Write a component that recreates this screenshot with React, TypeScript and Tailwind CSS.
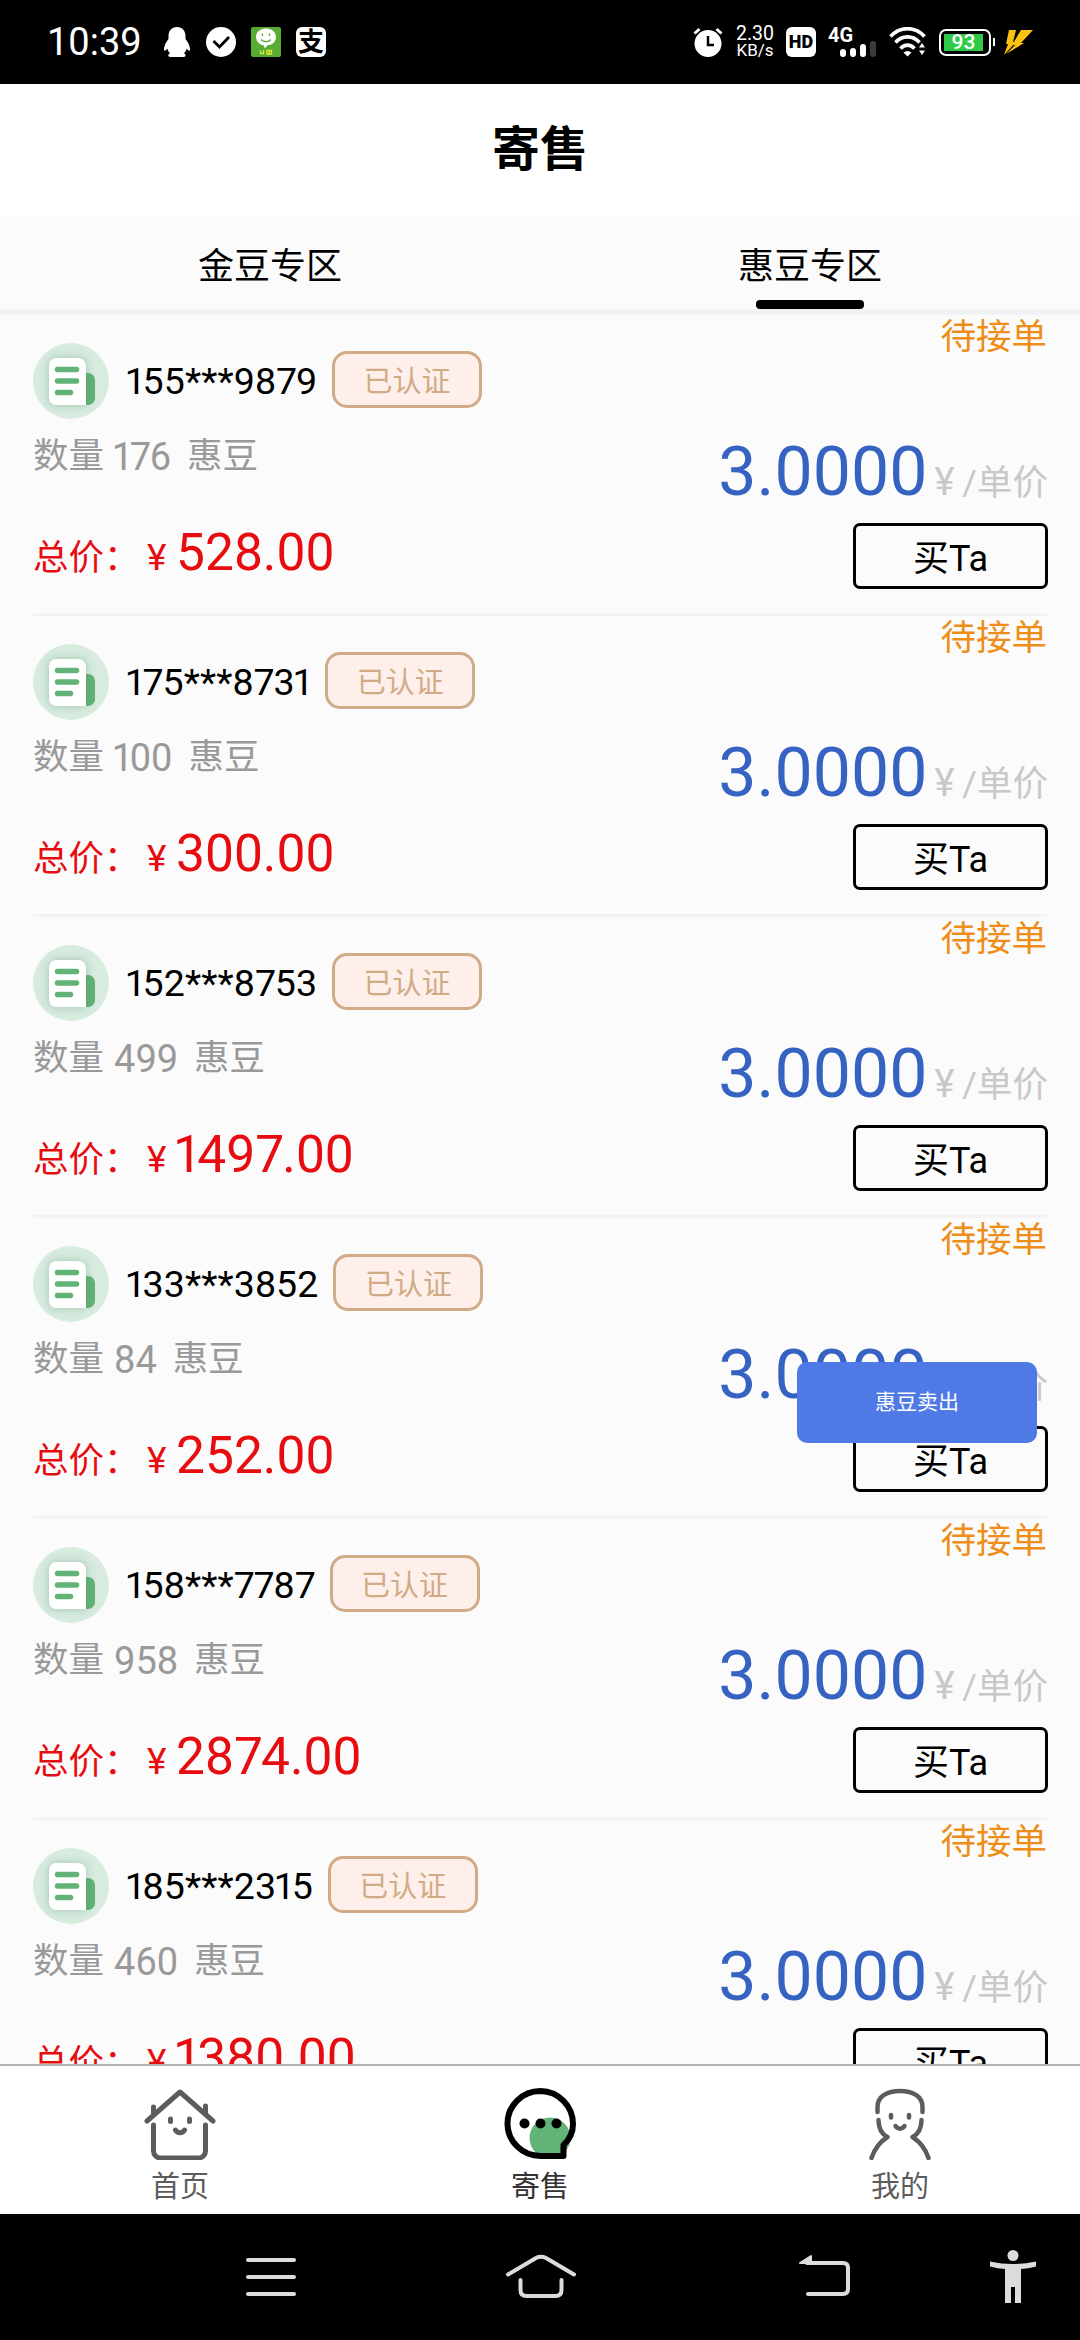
import type { ReactNode } from "react";

type Order = {
  phone: string;
  amount: string;
  total: string;
};

const orders: Order[] = [
  { phone: "155***9879", amount: "176", total: "528.00" },
  { phone: "175***8731", amount: "100", total: "300.00" },
  { phone: "152***8753", amount: "499", total: "1497.00" },
  { phone: "133***3852", amount: "84", total: "252.00" },
  { phone: "158***7787", amount: "958", total: "2874.00" },
  { phone: "185***2315", amount: "460", total: "1380.00" },
];

// "1" and "7" are narrower than the other digits
const digitClass: Record<string, string> = {
  "1": "-ml-[0.06em] -mr-[0.09em]",
  "7": "-mr-[0.035em]",
};

function Digits({ value }: { value: string }) {
  return (
    <>
      {value.split("").map((char, index) => (
        <span key={index} className={digitClass[char]}>
          {char}
        </span>
      ))}
    </>
  );
}

function StatusBar() {
  return (
    <div className="flex h-[84px] shrink-0 items-center bg-black pl-[47px] pr-[47px] text-white">
      <span className="w-[116px] text-[38px] leading-[46px]">10:39</span>

      <div className="flex items-center gap-[15px]">
        <svg width="28" height="30" viewBox="0 0 28 30" fill="white">
          <path d="M14 0C8.500 0 5.500 4 5.500 9v3C3 15 1 19 1 22.500c0 2 1.500 1.500 3.200-1 .6 2 1.600 3.500 2.800 4.700-2.200 1-2.400 3.300.3 3.800h13.400c2.700-.5 2.500-2.800.3-3.800 1.200-1.200 2.200-2.700 2.800-4.700 1.700 2.500 3.200 3 3.200 1 0-3.500-2-7.500-4.500-10.500V9c0-5-3-9-8.500-9z" />
        </svg>
        <svg width="30" height="30" viewBox="0 0 30 30">
          <circle cx="15" cy="15" r="15" fill="white" />
          <path d="M7.500 14l6 6 9.500-10" fill="none" stroke="black" strokeWidth="2.800" />
        </svg>
        <svg width="30" height="30" viewBox="0 0 30 30">
          <rect width="30" height="30" rx="2" fill="#58ab35" />
          <path d="M15 1.500c-6 0-10 3.700-10 8.500 0 4.500 3.500 7.500 7.500 8.300l1.500 3.200 2.500-3.200c5-.5 8.500-3.800 8.500-8.300 0-4.800-4-8.500-10-8.500z" fill="white" />
          <path d="M11.500 6.500v2.500M18.500 6.500v2.500M10 12.500c2.500 3 7.500 3 10 0" fill="none" stroke="#58ab35" strokeWidth="1.300" />
          <path d="M9.500 23.500v3h3M12.500 23v4M16 23.500h4.500v3.500H16zM18.200 23.500v3.500" fill="none" stroke="#d8e83a" strokeWidth="1.300" />
        </svg>
        <span className="flex h-[30px] w-[30px] items-center justify-center rounded-[6px] bg-white text-[26px] font-bold leading-[30px] text-black">
          支
        </span>
      </div>

      <div className="ml-auto flex items-center">
        <svg width="30" height="30" viewBox="0 0 30 30">
          <circle cx="15" cy="16.500" r="13.500" fill="white" />
          <path d="M1.500 6.500l5-4.500M28.500 6.500l-5-4.500" stroke="white" strokeWidth="3" />
          <path d="M15 9v9h6" fill="none" stroke="black" strokeWidth="2.500" />
        </svg>
        <div className="ml-3 flex w-[40px] flex-col items-center text-[17px] leading-[17px]">
          <span className="text-[19.500px]">2.30</span>
          <span>KB/s</span>
        </div>
        <span className="ml-[11px] flex h-[30px] w-[30px] items-center justify-center rounded-[6px] bg-white text-[18px] font-black leading-[22px] text-black">
          HD
        </span>
        <div className="relative ml-[12px] h-[30px] w-[48px]">
          <span className="absolute -top-[2px] left-0 text-[20px] font-bold leading-[20px]">4G</span>
          <div className="flex h-full items-end justify-end gap-1">
            <i className="h-2 w-1.5 rounded-sm bg-white" />
            <i className="h-[9px] w-1.5 rounded-sm bg-white" />
            <i className="h-[13px] w-1.5 rounded-sm bg-white" />
            <i className="h-4 w-1.5 rounded-sm bg-[#3c3c3c]" />
          </div>
        </div>
        <svg className="ml-[13px]" width="38" height="30" viewBox="0 0 38 30">
          <g fill="none" stroke="white" strokeWidth="3.600">
            <path d="M1.500 9.500C11-1 26-1 35.500 9.500" />
            <path d="M6.500 15.500c6.500-7.500 17.500-7.500 24 0" />
            <path d="M11.500 21.500c4-4.500 10-4.500 14 0" />
          </g>
          <path d="M14.500 25.500c2.500-2 5.500-2 8 0L18.500 29.500z" fill="white" />
          <path d="M30 20.500l3-4.500 3 4.500zM30 23.500l3 4.500 3-4.500z" fill="white" />
        </svg>
        <div className="ml-[12px] flex h-[27px] w-[52px] items-center rounded-[7px] border-2 border-white p-[3px]">
          <div className="flex h-[17px] w-[39px] items-center justify-center bg-[#2fcb48] text-[21px] font-medium leading-[24px]">
            93
          </div>
        </div>
        <i className="ml-0.5 h-2 w-[2px] bg-white" />
        <svg className="ml-[8px]" width="30" height="25" viewBox="0 0 30 25" fill="#fdc20f">
          <path d="M6 0h7l-3 12h3L1 25l4-11H3z" />
          <path d="M18 0h12L18 13h3L3 24l9-9h-3z" />
        </svg>
      </div>
    </div>
  );
}

function OrderIcon() {
  return (
    <svg width="76" height="76" viewBox="0 0 76 76">
      <circle cx="38" cy="38" r="38" fill="#d7ebdf" />
      <path d="M52 30h3a7 7 0 0 1 7 7v19a7 7 0 0 1-7 6h-3z" fill="#62b377" />
      <path
        className="drop-shadow-[0_0_4px_rgba(60,120,80,0.35)]"
        d="M23 15h22a8 8 0 0 1 8 8v39H23a7 7 0 0 1-7-7V22a7 7 0 0 1 7-7z"
        fill="white"
      />
      <path d="M24.500 26.500h19M24.500 38h19M24.500 49.500h13" stroke="#62b377" strokeWidth="5.500" strokeLinecap="round" />
    </svg>
  );
}

function OrderItem({ phone, amount, total }: Order) {
  return (
    <div className="relative mx-[33px] h-[301px] shrink-0 border-b-3 border-[#f3f3f3] pt-7">
      <span className="absolute right-0 top-[2px] text-[35.500px] leading-[40px] text-[#ee8d17]">待接单</span>

      <div className="flex h-[76px] items-center">
        <OrderIcon />
        <span className="ml-[18px] whitespace-nowrap text-[37.500px] leading-[44px] tracking-[0.1px] text-black">
          <Digits value={phone} />
        </span>
        <span className="mb-[3px] ml-[15px] flex h-[57px] w-[150px] items-center justify-center rounded-[15px] border-3 border-[#d0ab86] bg-[#feefea] pt-[5px] text-[29px] leading-[36px] text-[#d0ab86]">
          已认证
        </span>
      </div>

      <div className="flex justify-between">
        <div>
          <div className="mt-[16px] flex h-[44px] items-center whitespace-pre text-[35.500px] text-[#999999]">
            <span>数量</span>
            <span className="ml-[10px] text-[38px]">
              <Digits value={amount} />
            </span>
            <span className="ml-[16px]">惠豆</span>
          </div>
          <div className="mt-[44px] flex h-[60px] items-baseline leading-[60px] text-[#e60c10]">
            <span className="w-[114px] text-[35.500px]">总价：</span>
            <span className="w-[29px] text-[37px]">¥</span>
            <span className="text-[51.500px]">
              <Digits value={total} />
            </span>
          </div>
        </div>

        <div className="-mr-px flex flex-col items-end">
          <div className="mt-[13px] flex h-[80px] items-baseline leading-[80px]">
            <span className="text-[68px] text-[#3663c2]">3.0000</span>
            <span className="ml-[7px] text-[38px] text-[#c8c8c8]">¥</span>
            <span className="ml-[8px] text-[35.500px] text-[#c8c8c8]">/单价</span>
          </div>
          <button
            type="button"
            className="mt-[11px] h-[66px] w-[195px] rounded-[7px] border-3 border-black pt-[6px] text-[36px] leading-[44px] text-black"
          >
            买Ta
          </button>
        </div>
      </div>
    </div>
  );
}

function HomeIcon() {
  return (
    <svg width="72" height="72" viewBox="0 0 72 72" fill="none" stroke="#5c5c5c" strokeWidth="5" strokeLinecap="round" strokeLinejoin="round">
      <path d="M3 33L36 4l33 29M9.500 19v8M61.500 18v8" />
      <path d="M9.500 37v26a7 7 0 0 0 7 7h38a7 7 0 0 0 7-7V37" />
      <path d="M26.500 31v2.500M45.500 31v2.500M31.500 42c2 3.500 7 3.500 9 0" />
    </svg>
  );
}

function ChatIcon() {
  return (
    <svg width="72" height="72" viewBox="0 0 72 72">
      <circle cx="46" cy="50" r="20.500" fill="#62b377" />
      <path d="M36.500 3a33 32.500 0 1 0 0 65H59.500V57c5.500-5 9.500-12 9.500-21A33 33 0 0 0 36.500 3z" fill="none" stroke="black" strokeWidth="6" strokeLinejoin="round" />
      <circle cx="20.500" cy="35.500" r="5" />
      <circle cx="36.500" cy="35.500" r="5" />
      <circle cx="52.500" cy="35.500" r="5" />
    </svg>
  );
}

function UserIcon() {
  return (
    <svg width="72" height="72" viewBox="0 0 72 72" fill="none" stroke="#5c5c5c" strokeWidth="4.500" strokeLinecap="round" strokeLinejoin="round">
      <path d="M13.500 24v-5c0-11 10-16 22.500-16s22.500 5 22.500 16v5" />
      <path d="M14.500 32c0 8 3 14 9 17-8 5-13 12-16 21M57.500 32c0 8-3 14-9 17 8 5 13 12 16 21" />
      <path d="M27 27v2.500M45 27v2.500M31.500 38c2 3.500 7 3.500 9 0" />
    </svg>
  );
}

function TabItem({ icon, label, active }: { icon: ReactNode; label: string; active?: boolean }) {
  return (
    <div className="flex flex-1 flex-col items-center pt-[22px]">
      {icon}
      <span className={`mt-[10px] text-[29px] leading-[34px] ${active ? "text-[#333333]" : "text-[#5c5c5c]"}`}>
        {label}
      </span>
    </div>
  );
}

function SystemNav() {
  return (
    <div className="flex h-[126px] shrink-0 items-center bg-black pl-[245px] pr-[43px]">
      <svg width="52" height="54" viewBox="0 0 52 54" stroke="#dcdcdc" strokeWidth="4" strokeLinecap="round">
        <path d="M3 10h46M3 27h46M3 44h46" />
      </svg>
      <svg className="ml-[208px]" width="72" height="54" viewBox="0 0 72 54" fill="none" stroke="#dcdcdc" strokeWidth="4" strokeLinecap="round" strokeLinejoin="round">
        <path d="M3 24.500L31 8q5-2.500 10 0l28 16.500" />
        <path d="M15.500 30v10q0 6 6 6h29q6 0 6-6V30" />
      </svg>
      <svg className="ml-[220px]" width="54" height="54" viewBox="0 0 54 54" fill="none" stroke="#dcdcdc" strokeWidth="4" strokeLinecap="round" strokeLinejoin="round">
        <path d="M11 44h35q5 0 5-5V18q0-5-5-5H10" />
        <path d="M3 13l11-7v7z" fill="#dcdcdc" strokeWidth="2" />
      </svg>
      <svg className="ml-auto" width="48" height="54" viewBox="0 0 48 54" fill="#dcdcdc">
        <circle cx="24" cy="5.500" r="5.500" />
        <path d="M1 11.500q23 5 46 0v5q-8 2-15 2.500V53h-6V37h-4v16h-6V19q-7-.5-15-2.500z" />
      </svg>
    </div>
  );
}

export default function App() {
  return (
    <div className="relative flex h-[2340px] w-[1080px] flex-col overflow-hidden bg-[#fbfbfb] font-[Roboto,'Noto_Sans_CJK_SC',sans-serif]">
      <StatusBar />

      <header className="flex h-[132px] shrink-0 items-center justify-center bg-white text-[48px] font-bold text-black">
        寄售
      </header>

      <nav className="flex h-[99px] shrink-0 border-b-6 border-[#f2f2f2] text-[36px] text-black">
        <div className="flex-1 pt-[24px] text-center leading-[54px]">金豆专区</div>
        <div className="flex flex-1 flex-col items-center justify-between pt-[24px] leading-[54px]">
          惠豆专区
          <i className="h-[9px] w-[108px] rounded-[4px] bg-black" />
        </div>
      </nav>

      <main className="flex min-h-0 flex-1 flex-col overflow-hidden">
        {orders.map((order) => (
          <OrderItem key={order.phone} {...order} />
        ))}
      </main>

      <footer className="flex h-[150px] shrink-0 border-t-2 border-[#b4b4b4] bg-white">
        <TabItem icon={<HomeIcon />} label="首页" />
        <TabItem icon={<ChatIcon />} label="寄售" active />
        <TabItem icon={<UserIcon />} label="我的" />
      </footer>

      <SystemNav />

      <button
        type="button"
        className="absolute left-[797px] top-[1362px] h-[81px] w-[240px] rounded-[10px] bg-[#4f7ae5] text-[21px] text-white"
      >
        惠豆卖出
      </button>
    </div>
  );
}
